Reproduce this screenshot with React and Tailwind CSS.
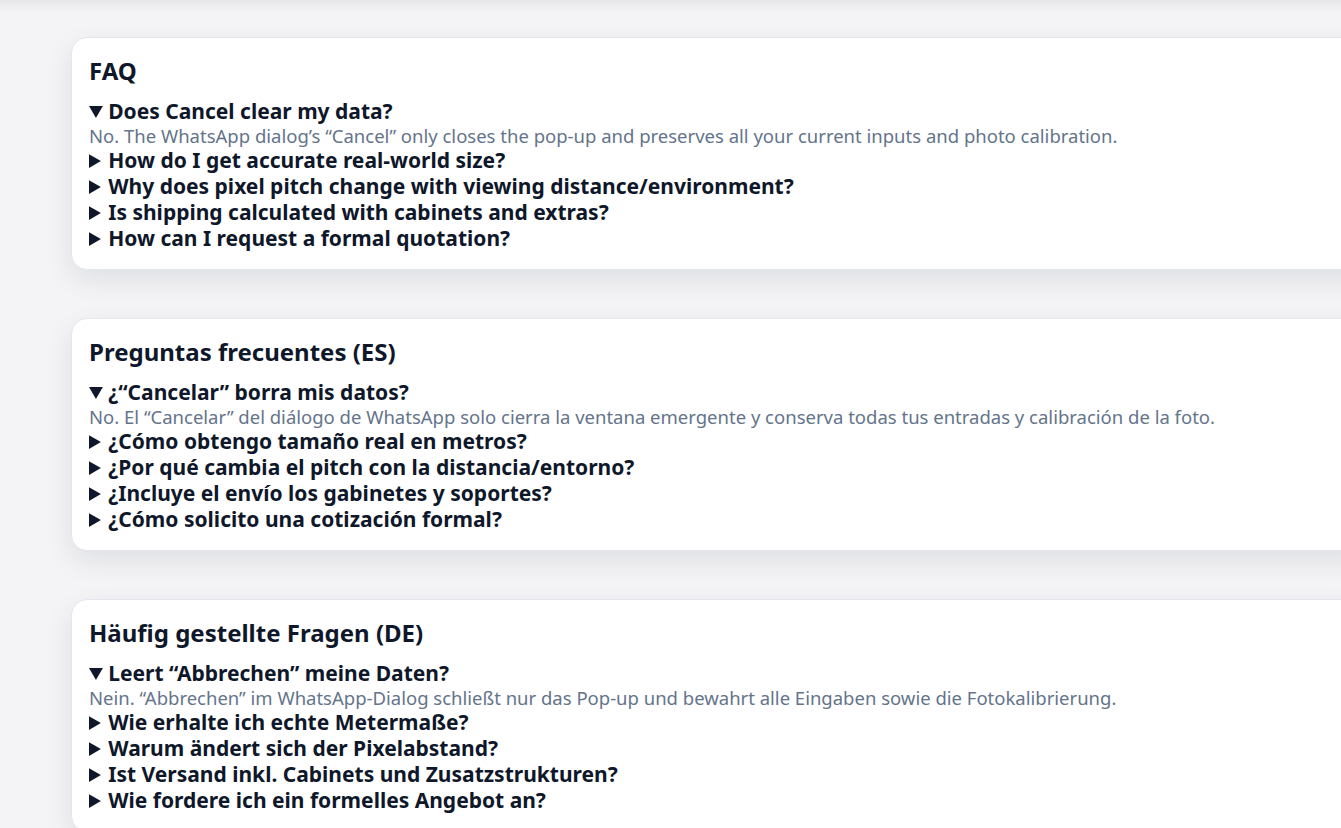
import React from "react";

const sections = [
  {
    title: "FAQ",
    items: [
      {
        q: "Does Cancel clear my data?",
        a: "No. The WhatsApp dialog’s “Cancel” only closes the pop-up and preserves all your current inputs and photo calibration.",
      },
      { q: "How do I get accurate real-world size?" },
      { q: "Why does pixel pitch change with viewing distance/environment?" },
      { q: "Is shipping calculated with cabinets and extras?" },
      { q: "How can I request a formal quotation?" },
    ],
  },
  {
    title: "Preguntas frecuentes (ES)",
    items: [
      {
        q: "¿“Cancelar” borra mis datos?",
        a: "No. El “Cancelar” del diálogo de WhatsApp solo cierra la ventana emergente y conserva todas tus entradas y calibración de la foto.",
      },
      { q: "¿Cómo obtengo tamaño real en metros?" },
      { q: "¿Por qué cambia el pitch con la distancia/entorno?" },
      { q: "¿Incluye el envío los gabinetes y soportes?" },
      { q: "¿Cómo solicito una cotización formal?" },
    ],
  },
  {
    title: "Häufig gestellte Fragen (DE)",
    items: [
      {
        q: "Leert “Abbrechen” meine Daten?",
        a: "Nein. “Abbrechen” im WhatsApp-Dialog schließt nur das Pop-up und bewahrt alle Eingaben sowie die Fotokalibrierung.",
      },
      { q: "Wie erhalte ich echte Metermaße?" },
      { q: "Warum ändert sich der Pixelabstand?" },
      { q: "Ist Versand inkl. Cabinets und Zusatzstrukturen?" },
      { q: "Wie fordere ich ein formelles Angebot an?" },
    ],
  },
];

function FaqCard({ title, items }) {
  return (
    <section className="w-[1300px] shrink-0 rounded-2xl border border-[#e3e6ee] bg-white px-[17px] py-[18px] shadow-[0_10px_28px_rgba(15,23,42,0.09)]">
      <h2 className="mb-3 text-[24px] font-bold leading-[30px] text-[#0f172a]">{title}</h2>
      {items.map((item, i) => (
        <details key={i} open={!!item.a}>
          <summary className="cursor-pointer text-[21px] font-bold leading-[26px] text-[#0f172a]">
            <span className="-ml-[3px]">{item.q}</span>
          </summary>
          {item.a && (
            <p className="text-[18.5px] leading-[23px] text-[#64748b]">{item.a}</p>
          )}
        </details>
      ))}
    </section>
  );
}

export default function App() {
  return (
    <div className="h-[828px] overflow-hidden bg-[#f4f4f6] font-['Noto_Sans',sans-serif]">
      <div className="h-[12px] bg-gradient-to-b from-[#e6e6e8] to-[#f4f4f6]"></div>
      <div className="flex flex-col gap-[48px] pl-[71px] pt-[25px]">
        {sections.map((s) => (
          <FaqCard key={s.title} title={s.title} items={s.items} />
        ))}
      </div>
    </div>
  );
}
